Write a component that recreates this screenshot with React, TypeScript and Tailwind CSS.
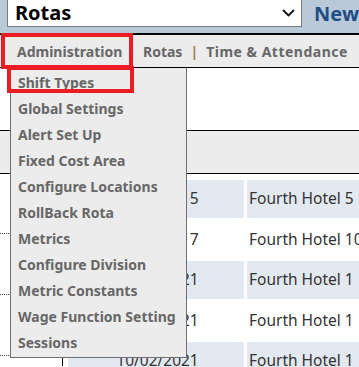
const menuItems = [
  'Shift Types',
  'Global Settings',
  'Alert Set Up',
  'Fixed Cost Area',
  'Configure Locations',
  'RollBack Rota',
  'Metrics',
  'Configure Division',
  'Metric Constants',
  'Wage Function Setting',
  'Sessions',
];

const rows = [
  { date: '10/02/2015', site: 'Fourth Hotel 5' },
  { date: '10/02/2017', site: 'Fourth Hotel 10' },
  { date: '10/02/2021', site: 'Fourth Hotel 1' },
  { date: '10/02/2021', site: 'Fourth Hotel 1' },
  { date: '10/02/2021', site: 'Fourth Hotel 1' },
];

export default function App() {
  return (
    <div className="relative w-[359px] h-[367px] overflow-hidden bg-white font-['Noto_Sans',sans-serif]">
      {/* top bar */}
      <div className="flex items-start h-[33px] bg-[#bac9d8] pl-[7px]">
        <div className="flex items-center justify-between w-[300px] h-[27px] bg-white border border-t-0 border-[#7a7a7a] pl-[7px] pr-[6px]">
          <span className="text-[20px] font-bold leading-none text-black">Rotas</span>
          <svg width="13" height="8" viewBox="0 0 13 8" fill="none">
            <path d="M1 1l5.5 5.5L12 1" stroke="#111" strokeWidth="1.8" />
          </svg>
        </div>
        <span className="ml-[12px] mt-[4px] text-[20px] font-bold leading-none text-[#1d4f85] whitespace-nowrap">
          New
        </span>
      </div>
      <div className="h-[2px] bg-black" />

      {/* nav */}
      <div className="flex items-center h-[33px] bg-[#ececec] border-b border-black pl-[17px] text-[14px] font-bold text-[#676767] whitespace-nowrap">
        <span>Administration</span>
        <span className="ml-[6px] mr-[7px] text-[#9a7b4f]">|</span>
        <span>Rotas</span>
        <span className="mx-[8px] text-[#9a7b4f]">|</span>
        <span className="tracking-[0.5px]">Time &amp; Attendance</span>
        <span className="mx-[9px] text-[#9a7b4f]">|</span>
      </div>

      {/* page body */}
      <div className="h-[63px] border-b border-black" />
      <div className="h-[43px] bg-[#ececec] border-b border-black" />

      <div className="flex">
        <div className="w-[68px] shrink-0 flex flex-col">
          <div className="w-[33px] h-[60px] border-b border-dotted border-[#444]" />
          <div className="w-[33px] h-[61px] border-b border-dotted border-[#444]" />
          <div className="w-[33px] h-[61px] border-b border-dotted border-[#444]" />
          <div className="w-[63px] h-[10px] border-r border-black" />
        </div>
        <div className="flex-1 flex flex-col gap-[3px] pt-[6px] text-[15.5px] text-[#333]">
          {rows.map((r, i) => (
            <div key={i} className="flex gap-[3px] h-[37.5px] shrink-0">
              <div
                className={
                  'w-[176px] shrink-0 flex items-center justify-center pl-[3px] ' +
                  (i % 2 === 0 ? 'bg-[#e3e9f1]' : 'bg-white')
                }
              >
                {r.date}
              </div>
              <div
                className={
                  'flex-1 flex items-center pl-[2px] whitespace-nowrap overflow-hidden ' +
                  (i % 2 === 0 ? 'bg-[#e3e9f1]' : 'bg-white')
                }
              >
                {r.site}
              </div>
            </div>
          ))}
        </div>
      </div>

      {/* dropdown menu */}
      <div className="absolute left-[10px] top-[68px] w-[177px] h-[290px] bg-[#ececec] border-x border-b border-[#707070] pt-[1px] text-[14px] font-bold text-[#676767] whitespace-nowrap">
        {menuItems.map((m) => (
          <div key={m} className="h-[26px] flex items-center pl-[7px]">
            {m}
          </div>
        ))}
      </div>

      {/* highlight boxes */}
      <div className="absolute left-[1px] top-[33px] w-[132px] h-[36px] border-[4px] border-[#ec1c24]" />
      <div className="absolute left-[7px] top-[66px] w-[127px] h-[27px] border-[4px] border-[#ec1c24]" />
    </div>
  );
}
